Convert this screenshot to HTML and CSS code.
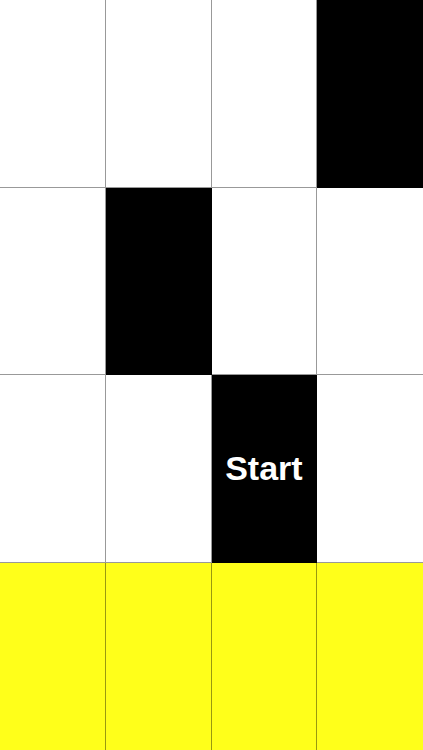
FILE: index.html
```html
<!DOCTYPE html>
<html>
<head>
<meta charset="utf-8">
<link rel="stylesheet" href="styles.css">
</head>
<body>
<div class="board">
  <div class="tile"></div><div class="tile"></div><div class="tile"></div><div class="tile black"></div>
  <div class="tile"></div><div class="tile black"></div><div class="tile"></div><div class="tile"></div>
  <div class="tile"></div><div class="tile"></div><div class="tile black start">Start</div><div class="tile"></div>
  <div class="tile yellow"></div><div class="tile yellow"></div><div class="tile yellow"></div><div class="tile yellow"></div>
</div>
</body>
</html>
```
FILE: styles.css
```css
html, body {
  margin: 0;
  padding: 0;
  background: #ffffff;
}
.board {
  width: 423px;
  height: 750px;
  display: grid;
  grid-template-columns: repeat(4, 1fr);
  grid-template-rows: repeat(4, 1fr);
}
.tile {
  box-sizing: border-box;
  background: #ffffff;
  border-right: 1px solid rgba(0, 0, 0, 0.4);
  border-bottom: 1px solid rgba(0, 0, 0, 0.4);
  display: flex;
  align-items: center;
  justify-content: center;
}
.tile:nth-child(4n) {
  border-right: none;
}
.black {
  background: #000000;
}
.yellow {
  background: #ffff1a;
  border-bottom: none;
}
.start {
  color: #ffffff;
  font-family: "Liberation Sans", Arial, sans-serif;
  font-weight: bold;
  font-size: 34px;
}
```
